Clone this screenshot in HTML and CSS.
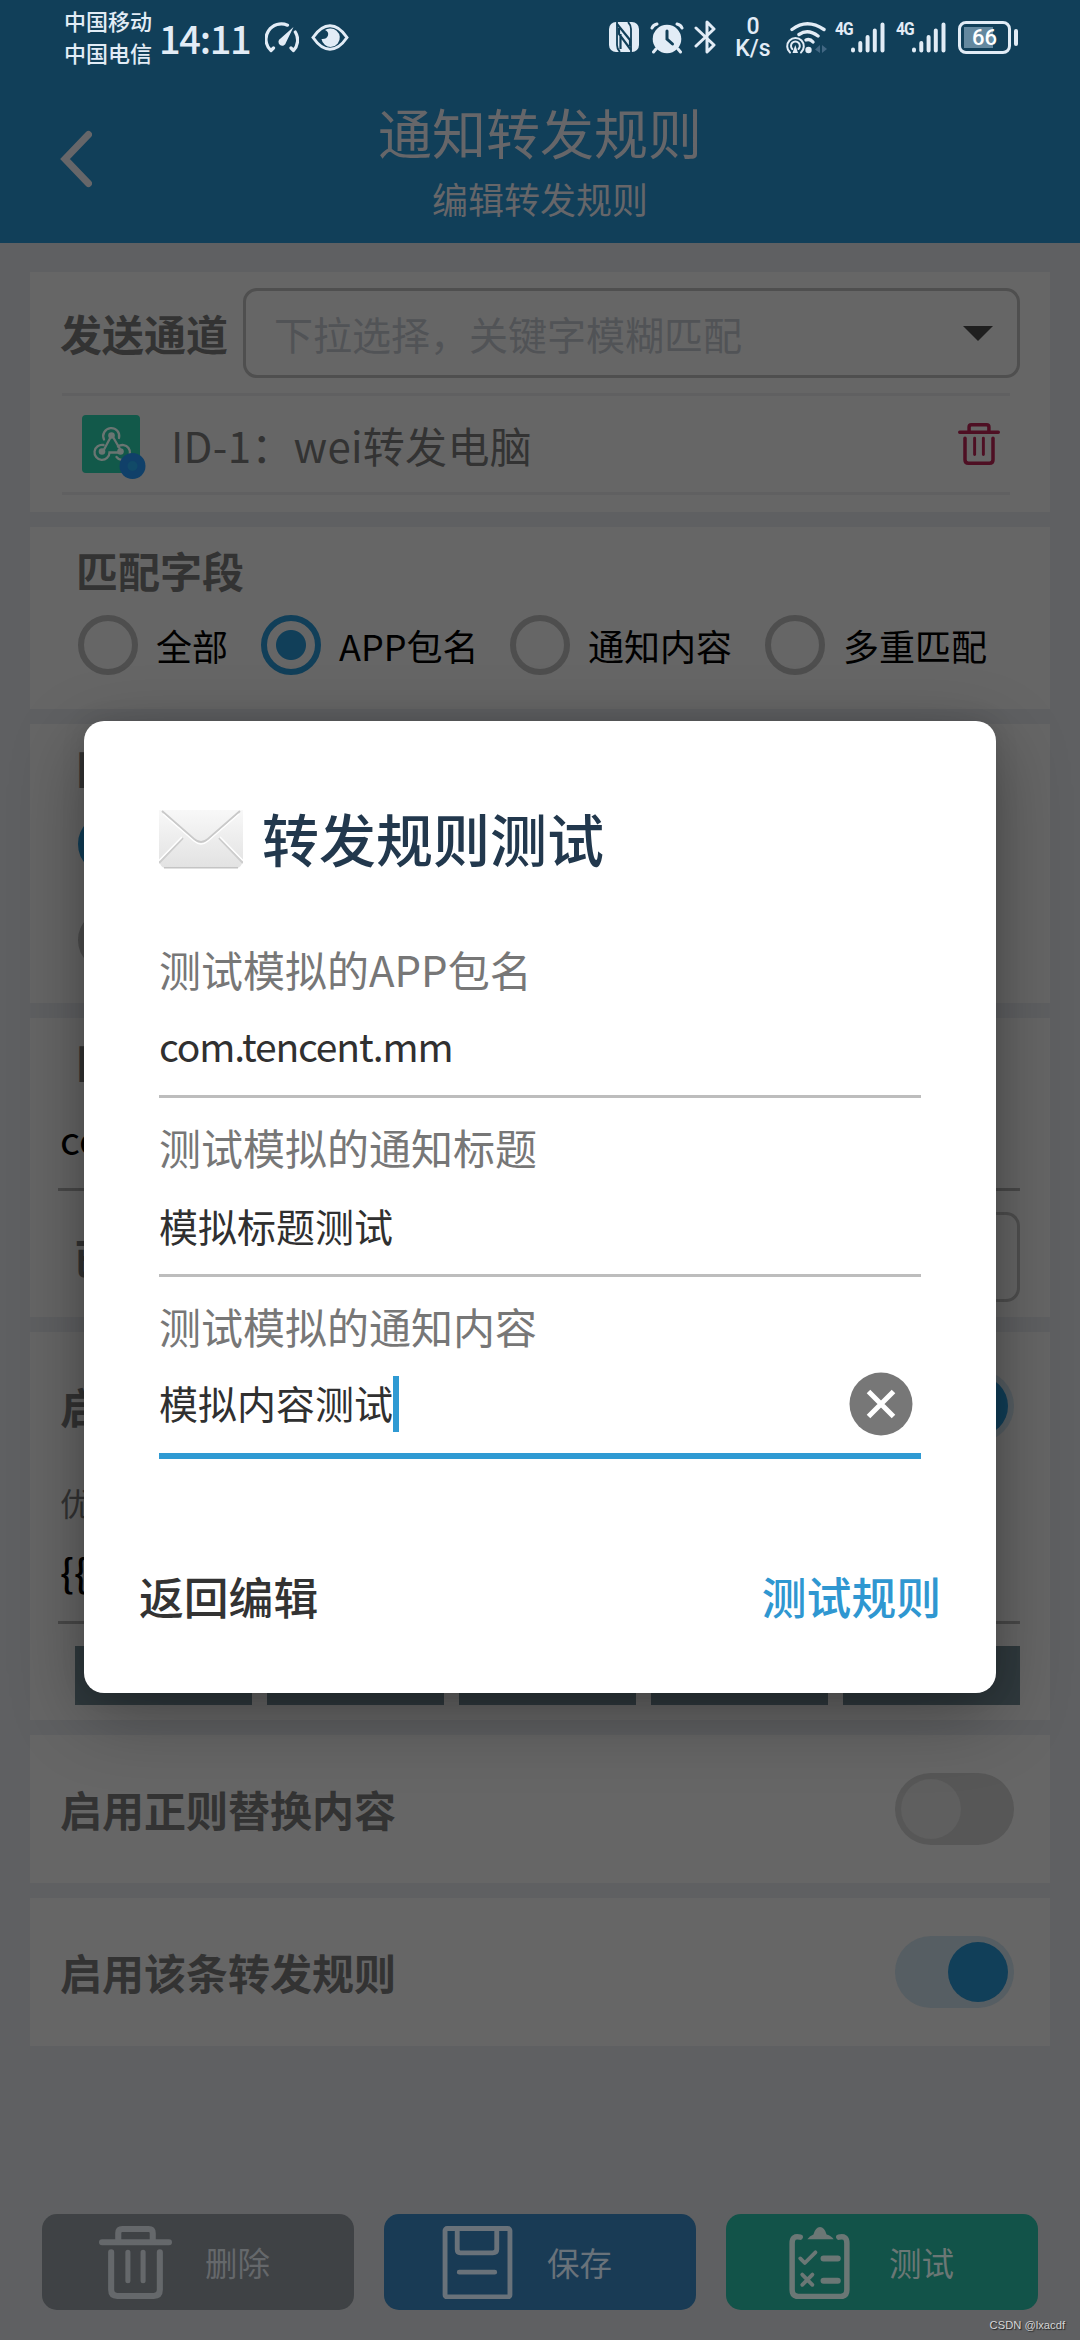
FILE: index.html
```html
<!DOCTYPE html>
<html lang="zh-CN">
<head>
<meta charset="utf-8">
<title>通知转发规则</title>
<link rel="stylesheet" href="styles.css">
</head>
<body>
<svg class="defs" width="0" height="0">
  <symbol id="trash" viewBox="0 0 72 72">
    <g fill="none" stroke="currentColor" stroke-width="6" stroke-linecap="round" stroke-linejoin="round">
      <path d="M3 16H69M19 15V7Q19 3 23 3H49Q53 3 53 7V15"/>
      <path d="M12 26V63Q12 69 18 69H54Q60 69 60 63V26"/><path d="M28.500 26V54M43.500 26V54" stroke-width="5"/>
    </g>
  </symbol>
  <symbol id="bars" viewBox="0 0 34 31">
    <g stroke="#e2ecf6" stroke-width="4" stroke-linecap="round">
      <path d="M2 27.500V28.500M9.300 21V28.500M16.600 15V28.500M23.800 8.500V28.500M31.500 2.500V28.500"/>
    </g>
  </symbol>
</svg>

<header class="header">
  <div class="status">
    <div class="carriers"><span>中国移动</span><span>中国电信</span></div>
    <time class="clock">14:11</time>
    <svg class="gauge" viewBox="0 0 34 31">
      <g fill="none" stroke="#e2ecf6" stroke-width="3.2" stroke-linecap="round" stroke-linejoin="round">
        <path d="M22.500 3.200A15.300 15.300 0 0 0 6 28.500L8.500 26"/>
        <path d="M30.300 10A15.300 15.300 0 0 1 28.500 28.500L26 26"/>
      </g>
      <path d="M28.500 5L21 20.500A3.800 3.800 0 1 1 15.500 16.500Z" fill="#e2ecf6"/>
    </svg>
    <svg class="eye" viewBox="0 0 38 27">
      <path d="M2 13.500Q10 1.800 19 1.800T36 13.500Q28 25.200 19 25.200T2 13.500Z" fill="none" stroke="#e2ecf6" stroke-width="3"/>
      <path d="M19 4.500A9.200 9.200 0 1 1 10.500 15Q15.500 15.500 17 11.500Q18 7.500 14 6Q16 4.500 19 4.500Z" fill="#e2ecf6"/>
    </svg>
    <div class="spacer"></div>
    <svg class="nfc" viewBox="0 0 30 30">
      <rect width="30" height="30" rx="7" fill="#e2ecf6"/>
      <path d="M8 0V23Q8 27 11 30M22 30V7Q22 3 19 0" fill="none" stroke="#113f59" stroke-width="1.800"/>
      <path d="M8 2L21 18V24M22 28L10 12V6M11.500 12V27" fill="none" stroke="#113f59" stroke-width="2.200"/>
    </svg>
    <svg class="alarm" viewBox="0 0 34 32">
      <circle cx="17" cy="17" r="14.300" fill="#e2ecf6"/>
      <path d="M2 6Q3 3 7 2M32 6Q31 3 27 2M6 27L3.500 30M28 27L30.500 30" stroke="#e2ecf6" stroke-width="3" fill="none" stroke-linecap="round"/>
      <path d="M17 9V17L22.500 22" stroke="#113f59" stroke-width="3" fill="none" stroke-linecap="round"/>
    </svg>
    <svg class="bt" viewBox="0 0 22 34">
      <path d="M2 8L20 25L13 32V2L20 9L2 26" fill="none" stroke="#e2ecf6" stroke-width="3" stroke-linecap="round" stroke-linejoin="round"/>
    </svg>
    <div class="speed"><span>0</span><span>K/s</span></div>
    <svg class="wifi" viewBox="0 0 42 33">
      <g fill="none" stroke="#e2ecf6" stroke-width="3.400" stroke-linecap="round">
        <path d="M6 8.500Q21 -3 38 8.500M13 13.500Q22 7.500 32 15"/>
        <path d="M20 19Q24 17.500 27 21"/>
      </g>
      <circle cx="22.500" cy="29" r="3.200" fill="#e2ecf6"/>
      <g fill="none" stroke="#e2ecf6" stroke-width="2" stroke-linecap="round">
        <path d="M4 31.500A8.300 8.300 0 1 1 15 31.500M6.300 28A4.400 4.400 0 1 1 12.500 28"/>
      </g>
      <path d="M9.300 24L12 32H6.500Z" fill="#e2ecf6"/>
      <path d="M34 24V32L29 28.500ZM36 24V32L41 28Z" fill="#426783"/>
    </svg>
    <div class="net"><span>4G</span><svg><use href="#bars"/></svg></div>
    <div class="net second"><span>4G</span><svg><use href="#bars"/></svg></div>
    <div class="battery"><b>66</b></div>
    <i class="nub"></i>
  </div>
  <div class="bar">
    <svg class="back" viewBox="0 0 32 58"><path d="M28.500 4.500L5 29L28.500 53.500" fill="none" stroke="#666669" stroke-width="7" stroke-linecap="round"/></svg>
    <div class="titles"><h1>通知转发规则</h1><p>编辑转发规则</p></div>
  </div>
</header>

<main class="main">
  <section class="card channel">
    <div class="pick">
      <h2>发送通道</h2>
      <div class="select"><span>下拉选择，关键字模糊匹配</span><i class="caret"></i></div>
    </div>
    <div class="item">
      <svg class="hook" viewBox="0 0 64 66">
        <rect x="0" y="0" width="58" height="58" rx="4" fill="#12594a"/>
        <g fill="none" stroke="#6a7572" stroke-width="2.300" stroke-linecap="round">
          <path d="M22 24.500A8 8 0 1 1 37 23M29.500 20.500L21 36.500M21.500 30A7.500 7.500 0 1 0 27.500 37.500H37M31 22L38 34M36 31.500A7.500 7.500 0 1 1 34.500 42"/>
        </g>
        <g fill="#6a7572"><circle cx="29.500" cy="20.500" r="3.300"/><circle cx="20" cy="36.500" r="3.300"/><circle cx="38.500" cy="36.500" r="3.300"/></g>
        <circle cx="50.500" cy="51" r="13" fill="#104069"/>
        <circle cx="50.500" cy="51" r="5" fill="#114a68"/>
      </svg>
      <span class="name">ID-1：wei转发电脑</span>
      <svg class="remove"><use href="#trash"/></svg>
    </div>
  </section>

  <section class="card fields">
    <h2>匹配字段</h2>
    <div class="radios">
      <label class="r1"><i></i>全部</label>
      <label class="r2"><i class="on"></i>APP包名</label>
      <label class="r3"><i></i>通知内容</label>
      <label class="r4"><i></i>多重匹配</label>
    </div>
  </section>

  <section class="card modes">
    <h2>匹配模式</h2>
    <div class="radios"><label><i class="on"></i></label></div>
    <div class="radios"><label><i></i></label></div>
  </section>

  <section class="card value">
    <h2>匹配的值</h2>
    <div class="input">com.tencent.mm</div>
    <div class="pick"><h2>已装应用</h2><div class="select"></div></div>
  </section>

  <section class="card template">
    <div class="toggle"><h2>启用自定义模板</h2><span class="switch on"></span></div>
    <p class="hint">优先级</p>
    <div class="input">{{</div>
    <div class="chips"><i></i><i></i><i></i><i></i><i></i></div>
  </section>

  <section class="card toggle"><h2>启用正则替换内容</h2><span class="switch"></span></section>
  <section class="card toggle"><h2>启用该条转发规则</h2><span class="switch on"></span></section>
</main>

<footer class="footer">
  <button class="btn gray"><svg><use href="#trash"/></svg>删除</button>
  <button class="btn blue">
    <svg viewBox="0 0 72 72"><g fill="none" stroke="currentColor" stroke-width="4.800" stroke-linecap="round" stroke-linejoin="round"><rect x="4" y="2.500" width="64" height="67.500" rx="2"/><path d="M16 3V23Q16 26.500 19 26.500H51Q55 26.500 55 23V3M18 45.500H53"/></g></svg>保存
  </button>
  <button class="btn green">
    <svg viewBox="0 0 72 72"><g fill="none" stroke="currentColor" stroke-width="5.400" stroke-linecap="round" stroke-linejoin="round"><path d="M17 11Q9 9 9 17V63Q9 69.500 15 69.500H57Q63 69.500 63 63V17Q63 9 55 11"/><path d="M40 32H54M40 54H54" stroke-width="6"/><path d="M17 32L21.500 36.500L32 26M19 48L29 58M29 48L19 58" stroke-width="3.800"/></g><path d="M24 13Q26 10 30 8.500Q32 1 36.500 1T43 8.500Q48 10 50 13Z" fill="currentColor"/></svg>测试
  </button>
</footer>

<div class="dialog" role="dialog">
  <div class="caption">
    <svg viewBox="0 0 84 60">
      <defs><linearGradient id="paper" x2="0" y2="1"><stop offset="0" stop-color="#f8f8f8"/><stop offset="1" stop-color="#e2e2e2"/></linearGradient></defs>
      <path d="M0 1H84V52Q82 59 78 59H6Q2 59 0 52Z" fill="url(#paper)"/>
      <path d="M5 58.700H79" stroke="#c4c4c4" stroke-width="1.600"/>
      <path d="M0 54L24 29M84 54L60 29" stroke="#cdcdcd" stroke-width="2" fill="none"/>
      <path d="M0 51.500L23 28M84 51.500L61 28" stroke="#fff" stroke-width="1.500" fill="none"/>
      <path d="M3 2L35 30Q42 36 49 30L81 2" stroke="#c9c9c9" stroke-width="2" fill="none"/>
      <path d="M4 5L35 32Q42 38 49 32L80 5" stroke="#fff" stroke-width="1.300" fill="none"/>
    </svg>
    <h3>转发规则测试</h3>
  </div>
  <div class="field"><label>测试模拟的APP包名</label><div class="text latin">com.tencent.mm</div></div>
  <div class="field"><label>测试模拟的通知标题</label><div class="text">模拟标题测试</div></div>
  <div class="field active"><label>测试模拟的通知内容</label><div class="text"><span>模拟内容测试</span><i class="cursor"></i>
    <svg class="clear" viewBox="0 0 64 64"><circle cx="32" cy="32" r="31.500" fill="#777"/><path d="M19.500 19.500L44.500 44.500M44.500 19.500L19.500 44.500" stroke="#fff" stroke-width="5"/></svg></div></div>
  <div class="actions"><span>返回编辑</span><span class="primary">测试规则</span></div>
</div>
<div class="mark">CSDN @lxacdf</div>
</body>
</html>
```
FILE: styles.css
```css
* { box-sizing: border-box; margin: 0; padding: 0; }
body {
  width: 1080px; height: 2340px; position: relative; overflow: hidden;
  display: flex; flex-direction: column;
  background: #5f6062;
  font-family: "Noto Sans CJK SC", sans-serif;
}
.defs { position: absolute; }
svg { display: block; flex: none; }
i { display: block; flex: none; }
h1, h2, h3 { white-space: nowrap; }

.header { height: 243px; background: #113f59; color: #e2ecf6; }
.status { height: 100px; display: flex; align-items: flex-start; padding: 0 64px; }
.carriers { width: 95px; font-size: 22px; line-height: 32px; padding-top: 4px; display: flex; flex-direction: column; white-space: nowrap; font-weight: 500; }
.clock { width: 106px; font-size: 38px; line-height: 50px; padding-top: 13px; font-weight: 500; white-space: nowrap; letter-spacing: -1.3px; }
.gauge { width: 34px; height: 31px; margin-top: 22px; }
.eye { width: 38px; height: 27px; margin: 24px 0 0 12px; }
.spacer { flex: 1; }
.nfc { width: 30px; height: 30px; margin-top: 22px; }
.alarm { width: 34px; height: 32px; margin: 22px 0 0 11px; }
.bt { width: 22px; height: 34px; margin: 20px 0 0 10px; }
.speed { width: 44px; margin: 14px 0 0 15px; display: flex; flex-direction: column; align-items: center; font: 500 23px/22px Roboto, sans-serif; padding-top: 2px; }
.wifi { width: 42px; height: 33px; margin: 21px 0 0 11px; }
.net { width: 50px; display: flex; margin: 22px 0 0 7px; }
.net span { width: 16px; font: 700 19px/14px "Roboto", sans-serif; letter-spacing: -1px; transform: scaleX(.82); transform-origin: left; white-space: nowrap; }
.net svg { width: 34px; height: 31px; }
.net.second { margin-left: 11px; }
.battery { width: 53px; height: 33px; margin: 21px 0 0 12px; border: 3px solid #e2ecf6; border-radius: 8px; background: linear-gradient(90deg, #64889f 29px, transparent 29px) 3px 3px / 100% 21px no-repeat; display: flex; justify-content: center; }
.battery b { font: 500 22px/28px Roboto, sans-serif; color: #fff; }
.nub { width: 4px; height: 17px; border-radius: 2px; background: #e2ecf6; margin: 29px -2px 0 3px; }
.bar { display: grid; grid-template-columns: 140px 1fr 140px; color: #666669; }
.back { width: 32px; height: 58px; margin: 30px 0 0 60px; }
.titles { text-align: center; padding-top: 2px; }
.titles h1 { font-size: 54px; line-height: 60px; font-weight: 400; }
.titles p { font-size: 36px; line-height: 40px; margin-top: 16px; }

.main { padding: 29px 30px 0; display: flex; flex-direction: column; gap: 15px; }
.card { background: #666; padding: 0 30px 0 31px; color: #333; }
.card h2 { font-size: 42px; line-height: 60px; font-weight: 700; color: #333; margin-top: -1px; margin-left: -1px; }
.pick { display: flex; gap: 13px; align-items: center; }
.pick h2 { width: 170px; flex: none; }
.select { flex: 1; height: 90px; border: 3px solid #4f4f4f; border-radius: 14px; display: flex; align-items: center; justify-content: space-between; padding: 0 24px 0 28px; font-size: 39px; color: #515356; white-space: nowrap; }
.caret { border: 15px solid transparent; border-top-color: #1f1f1f; border-bottom: 0; }
.channel { height: 240px; padding-top: 16px; }
.item { height: 102px; margin: 15px 10px 0 1px; padding: 0 10px 0 20px; border-top: 3px solid #606061; border-bottom: 3px solid #606061; display: flex; align-items: center; }
.hook { width: 64px; height: 66px; margin-top: 7px; }
.name { font-size: 42px; letter-spacing: .3px; margin: 1px auto 0 25px; white-space: nowrap; }
.remove { width: 42px; height: 42px; color: #4e0f23; margin-top: -1px; }

.fields { height: 182px; padding: 14px 0 0 48px; }
.card.fields h2, .card.modes h2 { margin-left: -2px; }
.radios { display: flex; align-items: center; height: 60px; margin-top: 15px; color: #000; font-size: 36px; line-height: 60px; }
.radios label { display: flex; align-items: center; gap: 18px; white-space: nowrap; }
.radios i { width: 60px; height: 60px; border: 6px solid #4e4e4e; border-radius: 50%; }
.radios i.on { border-color: #113f59; background: radial-gradient(circle, #113f59 14.500px, transparent 15.500px); }
.r1 { width: 183px; }
.r2 { width: 249px; }
.r3 { width: 255px; }
.modes { height: 279px; padding: 15px 0 0 48px; }
.modes .radios { margin-top: 16px; }
.modes .radios + .radios { margin-top: 36px; }
.value { height: 299px; padding-top: 15px; }
.card.value h2 { margin-left: 15px; }
.input { font-size: 39px; line-height: 56px; color: #000; border-bottom: 3px solid #494949; margin-left: -3px; padding-left: 2px; }
.value .input { margin-top: 18px; height: 81px; }
.value .pick { margin-top: 21px; }
.card.value .pick h2 { width: 156px; margin-left: 12px; margin-top: 0; }
.toggle { display: flex; align-items: center; justify-content: space-between; }
.card.toggle { height: 148px; padding-right: 36px; }
.switch { width: 119px; height: 72px; border-radius: 36px; background: #575757; padding: 6px; display: flex; }
.switch::before { content: ""; width: 60px; height: 60px; border-radius: 50%; background: #5f5f5f; }
.switch.on { background: #565e63; justify-content: flex-end; }
.switch.on::before { background: #113f59; }
.template { height: 388px; padding-top: 38px; }
.template .toggle { height: 72px; padding-right: 6px; }
.hint { font-size: 32px; line-height: 40px; margin-top: 40px; margin-left: -1px; }
.template .input { margin-top: 21px; height: 81px; font-weight: 500; }
.chips { display: grid; grid-template-columns: repeat(5, 177px); gap: 15px; margin: 22px 0 0 14px; }
.chips i { height: 59px; background: #303a3e; }

.footer { margin-top: auto; padding: 0 42px 30px; display: grid; grid-template-columns: repeat(3, 312px); gap: 30px; }
.btn { height: 96px; border: 0; border-radius: 15px; display: flex; align-items: center; padding-left: 57px; gap: 33px; font: 400 32.500px/60px "Noto Sans CJK SC", sans-serif; }
.btn svg { width: 73px; height: 73px; }
.gray { background: #3f4245; color: #65686b; }
.blue { background: #193b55; color: #69727a; }
.green { background: #125349; color: #6b7775; }

.dialog { position: absolute; left: 84px; top: 721px; width: 912px; height: 972px; padding: 0 75px; border-radius: 20px; background: #fff; box-shadow: 0 22px 74px rgba(0, 0, 0, .32), 0 0 24px rgba(0, 0, 0, .1); }
.caption { height: 220px; padding-top: 88px; display: flex; align-items: flex-start; gap: 19px; }
.caption svg { width: 84px; height: 60px; }
.caption h3 { font-size: 57px; line-height: 62px; font-weight: 500; color: #22384d; margin-top: -3px; }
.field { height: 179px; border-bottom: 3px solid #bdbdbd; }
.caption + .field { height: 157px; }
.field label { display: block; height: 60px; line-height: 56px; font-size: 42px; color: #777; }
.field + .field { padding-top: 21px; }
.field .text { font-size: 39px; line-height: 54px; margin-top: 16px; color: #303030; display: flex; align-items: center; height: 60px; white-space: nowrap; padding-bottom: 1px; }
.field .latin { letter-spacing: -1.150px; padding-bottom: 4px; }
.text span { margin-top: -4px; }
.field.active { height: 182px; border-bottom: 6px solid #2f9ad3; }
.cursor { width: 6px; height: 56px; background: #2f9ad3; }
.clear { width: 64px; height: 64px; margin: 0 8px 0 auto; }
.actions { display: flex; justify-content: space-between; margin: 107px -20px 0; font-size: 44.800px; line-height: 60px; font-weight: 500; color: #333; }
.actions .primary { color: #2f97d1; }
.mark { position: absolute; right: 15px; bottom: 8px; font: 11.200px/14px "Liberation Sans", sans-serif; color: #d5d5d5; text-shadow: 1px 1px 1px #222; white-space: nowrap; }
```
